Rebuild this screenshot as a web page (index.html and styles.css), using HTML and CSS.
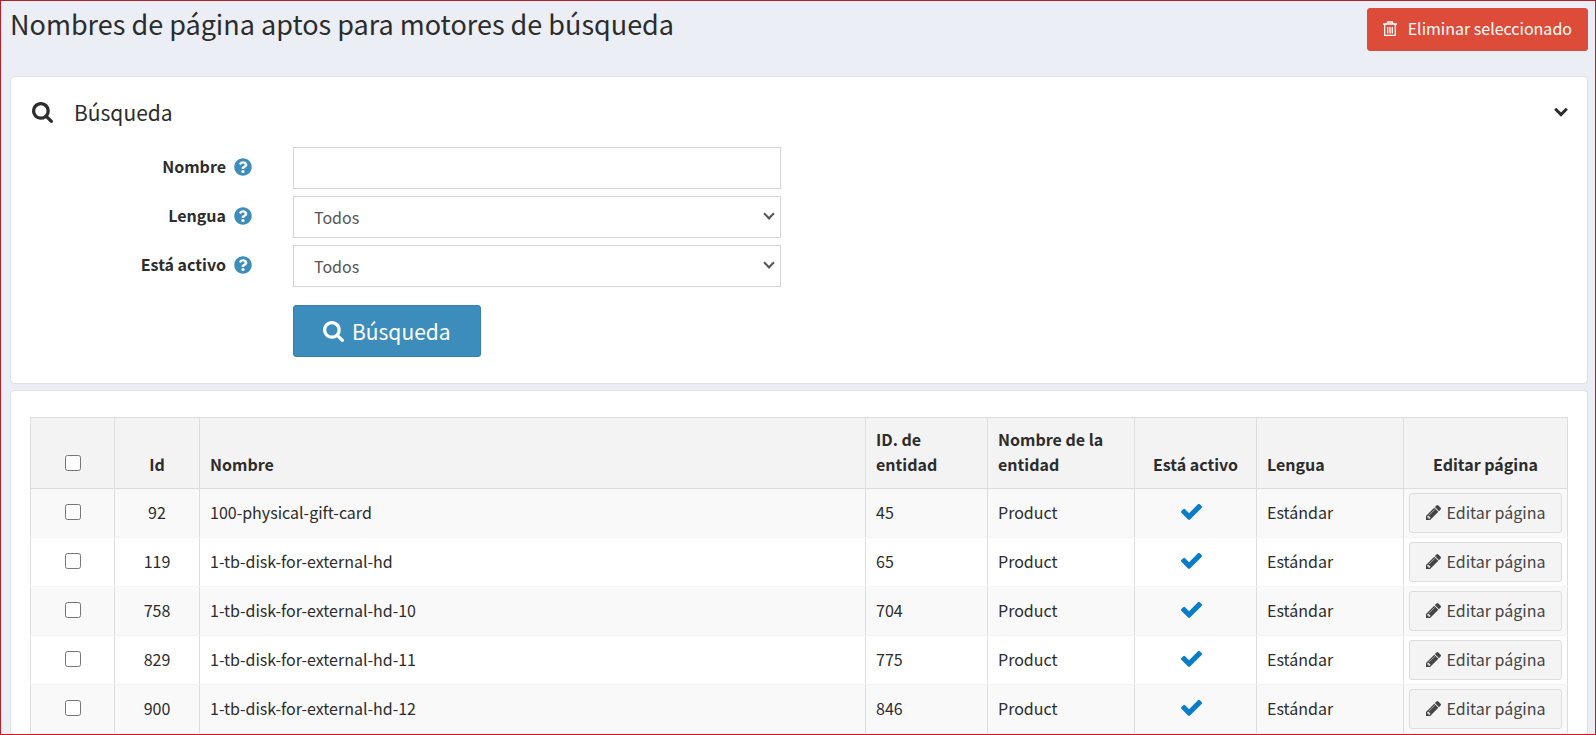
FILE: index.html
```html
<!DOCTYPE html>
<html lang="es">
<head>
<meta charset="utf-8">
<meta name="viewport" content="width=device-width, initial-scale=1">
<title>Nombres de página aptos para motores de búsqueda</title>
<link rel="stylesheet" href="styles.css">
</head>
<body>
<svg class="sprite" aria-hidden="true">
  <symbol id="i-search" viewBox="64 128 1664 1664"><path d="M1216 832q0-185-131.500-316.500t-316.500-131.500-316.500 131.500-131.500 316.500 131.500 316.500 316.500 131.500 316.500-131.500 131.500-316.500zm512 832q0 52-38 90t-90 38q-54 0-90-38l-343-342q-179 124-399 124-143 0-273.500-55.500t-225-150-150-225-55.500-273.500 55.500-273.500 150-225 225-150 273.500-55.500 273.500 55.500 225 150 150 225 55.500 273.500q0 220-124 399l343 343q37 37 37 90z"/></symbol>
  <symbol id="i-help" viewBox="0 0 512 512"><path d="M504 256c0 136.997-111.043 248-248 248S8 392.997 8 256C8 119.083 119.043 8 256 8s248 111.083 248 248zM262.655 90c-54.497 0-89.255 22.957-116.549 63.758-3.536 5.286-2.353 12.415 2.715 16.258l34.699 26.310c5.205 3.947 12.621 3.008 16.665-2.122 17.864-22.658 30.113-35.797 57.303-35.797 20.429 0 45.698 13.148 45.698 32.958 0 14.976-12.363 22.667-32.534 33.976C247.128 238.528 216 254.941 216 296v4c0 6.627 5.373 12 12 12h56c6.627 0 12-5.373 12-12v-1.333c0-28.462 83.186-29.647 83.186-106.667 0-58.002-60.165-102-116.531-102zM256 338c-25.365 0-46 20.635-46 46 0 25.364 20.635 46 46 46s46-20.636 46-46c0-25.365-20.635-46-46-46z"/></symbol>
  <symbol id="i-check" viewBox="121 344 1550 1178"><path d="M1671 566q0 40-28 68l-724 724-136 136q-28 28-68 28t-68-28l-136-136-362-362q-28-28-28-68t28-68l136-136q28-28 68-28t68 28l294 295 656-657q28-28 68-28t68 28l136 136q28 28 28 68z"/></symbol>
  <symbol id="i-pencil" viewBox="128 149 1515 1515"><path d="M491 1536l91-91-235-235-91 91v107h128v128h107zm523-928q0-22-22-22-10 0-17 7l-542 542q-7 7-7 17 0 22 22 22 10 0 17-7l542-542q7-7 7-17zm-54-192l416 416-832 832h-416v-416zm683 96q0 53-37 90l-166 166-416-416 166-165q36-38 90-38 53 0 91 38l235 234q37 39 37 91z"/></symbol>
  <symbol id="i-trash" viewBox="0 0 14 16"><path d="M0 3h14M4.500 3V1h5v2M1.700 3v11.300h10.600V3M4.700 6v6.500M7 6v6.500M9.300 6v6.500" fill="none" stroke="currentColor" stroke-width="1.300"/></symbol>
  <symbol id="i-down" viewBox="0 0 14 10"><path d="M1.200 1.800L7 7.600l5.800-5.800" fill="none" stroke="currentColor" stroke-width="3"/></symbol>
</svg>

<header class="page-header">
  <h1 class="page-title">Nombres de página aptos para motores de búsqueda</h1>
  <button type="button" class="btn btn-danger"><svg class="icon-trash"><use href="#i-trash"/></svg>Eliminar seleccionado</button>
</header>

<main class="content">
  <section class="card search-card">
    <div class="search-head">
      <svg class="icon-search"><use href="#i-search"/></svg>
      <h2 class="search-title">Búsqueda</h2>
      <button type="button" class="toggle" aria-label="Contraer búsqueda"><svg class="icon-down"><use href="#i-down"/></svg></button>
    </div>
    <form class="search-form">
      <div class="field-label"><label for="name">Nombre</label><svg class="icon-help"><use href="#i-help"/></svg></div>
      <input class="control" id="name" type="text">
      <div class="field-label"><label for="language">Lengua</label><svg class="icon-help"><use href="#i-help"/></svg></div>
      <div class="select-wrap"><select class="control" id="language"><option>Todos</option></select></div>
      <div class="field-label"><label for="active">Está activo</label><svg class="icon-help"><use href="#i-help"/></svg></div>
      <div class="select-wrap"><select class="control" id="active"><option>Todos</option></select></div>
      <button type="button" class="btn btn-search"><svg class="icon-search"><use href="#i-search"/></svg>Búsqueda</button>
    </form>
  </section>

  <section class="card table-card">
    <table class="grid">
      <colgroup><col class="c-check"><col class="c-id"><col><col class="c-entity"><col class="c-wide"><col class="c-entity"><col class="c-wide"><col class="c-edit"></colgroup>
      <thead>
        <tr><th class="mid"><input type="checkbox" class="tick" aria-label="Seleccionar todo"></th><th class="mid">Id</th><th>Nombre</th><th>ID. de entidad</th><th>Nombre de la entidad</th><th class="mid">Está activo</th><th>Lengua</th><th class="mid">Editar página</th></tr>
      </thead>
      <tbody>
        <tr><td class="mid"><input type="checkbox" class="tick" aria-label="Seleccionar 92"></td><td class="mid">92</td><td>100-physical-gift-card</td><td>45</td><td>Product</td><td class="state"><svg class="icon-check"><use href="#i-check"/></svg></td><td>Estándar</td><td class="edit"><button type="button" class="btn btn-edit"><svg class="icon-pencil"><use href="#i-pencil"/></svg>Editar página</button></td></tr>
        <tr><td class="mid"><input type="checkbox" class="tick" aria-label="Seleccionar 119"></td><td class="mid">119</td><td>1-tb-disk-for-external-hd</td><td>65</td><td>Product</td><td class="state"><svg class="icon-check"><use href="#i-check"/></svg></td><td>Estándar</td><td class="edit"><button type="button" class="btn btn-edit"><svg class="icon-pencil"><use href="#i-pencil"/></svg>Editar página</button></td></tr>
        <tr><td class="mid"><input type="checkbox" class="tick" aria-label="Seleccionar 758"></td><td class="mid">758</td><td>1-tb-disk-for-external-hd-10</td><td>704</td><td>Product</td><td class="state"><svg class="icon-check"><use href="#i-check"/></svg></td><td>Estándar</td><td class="edit"><button type="button" class="btn btn-edit"><svg class="icon-pencil"><use href="#i-pencil"/></svg>Editar página</button></td></tr>
        <tr><td class="mid"><input type="checkbox" class="tick" aria-label="Seleccionar 829"></td><td class="mid">829</td><td>1-tb-disk-for-external-hd-11</td><td>775</td><td>Product</td><td class="state"><svg class="icon-check"><use href="#i-check"/></svg></td><td>Estándar</td><td class="edit"><button type="button" class="btn btn-edit"><svg class="icon-pencil"><use href="#i-pencil"/></svg>Editar página</button></td></tr>
        <tr><td class="mid"><input type="checkbox" class="tick" aria-label="Seleccionar 900"></td><td class="mid">900</td><td>1-tb-disk-for-external-hd-12</td><td>846</td><td>Product</td><td class="state"><svg class="icon-check"><use href="#i-check"/></svg></td><td>Estándar</td><td class="edit"><button type="button" class="btn btn-edit"><svg class="icon-pencil"><use href="#i-pencil"/></svg>Editar página</button></td></tr>
      </tbody>
    </table>
  </section>
</main>
</body>
</html>
```
FILE: styles.css
```css
* { box-sizing: border-box; }

body {
  margin: 0;
  height: 100vh;
  overflow: hidden;
  display: flex;
  flex-direction: column;
  border: 1px solid #b3212b;
  border-bottom-color: #d9161c;
  background: #ebeef4;
  color: #2c2c2c;
  font-family: "Noto Sans CJK JP", "Noto Sans", sans-serif;
  font-size: 16px;
  line-height: 25px;
}

button, input, select { font: inherit; color: inherit; }
svg { display: block; fill: currentColor; flex: none; }
.sprite { position: absolute; width: 0; height: 0; }

.page-header {
  display: flex;
  justify-content: space-between;
  align-items: flex-start;
  padding: 7px 7px 25px 9px;
}
.page-title { margin: 0; font-size: 27px; font-weight: 400; line-height: 32px; }

.btn {
  display: flex;
  align-items: center;
  justify-content: center;
  border: 1px solid transparent;
  border-radius: 3px;
  white-space: nowrap;
}
.btn-danger { height: 43px; padding: 0 15px 2px; gap: 11px; background: #dd4b39; border-color: #dd4b39; color: #fff; }
.icon-trash { width: 14px; height: 16px; }

.content { flex: 1 0 auto; display: flex; flex-direction: column; gap: 6px; padding: 0 7px 0 9px; }
.card { background: #fff; border: 1px solid #dcdfe3; border-radius: 4px; }
.search-card { padding: 20px 19px 26px; }

.search-head { display: flex; align-items: center; height: 30px; margin-bottom: 20px; padding-left: 2px; }
.icon-search { width: 21px; height: 21px; }
.search-title { flex: 1; margin: 0 0 0 21px; font-size: 21px; font-weight: 400; line-height: 30px; }
.toggle { border: 0; background: none; padding: 0; }
.icon-down { width: 14px; height: 10px; }

.search-form {
  display: grid;
  grid-template-columns: 14.5% 31.7%;
  column-gap: 40px;
  row-gap: 7px;
}
.field-label { display: flex; justify-content: flex-end; align-items: center; gap: 8px; padding: 0 1px 3px 0; font-weight: 700; }
.icon-help { width: 18px; height: 18px; color: #3c8dbc; }
.control {
  width: 100%;
  height: 42px;
  padding: 0 20px;
  border: 1px solid #d2d4d8;
  border-radius: 0;
  background: #fff;
  color: #555;
  outline: 0;
  appearance: none;
}
.select-wrap { position: relative; }
.select-wrap::after {
  content: "";
  position: absolute;
  right: 8px;
  top: 14px;
  width: 6px;
  height: 6px;
  border: solid #555;
  border-width: 0 2px 2px 0;
  transform: rotate(45deg);
  pointer-events: none;
}
.btn-search {
  grid-column: 2;
  justify-self: start;
  height: 52px;
  margin-top: 11px;
  padding: 0 29px;
  gap: 8px;
  background: #3c8dbc;
  border-color: #367fa9;
  color: #fff;
  font-size: 21px;
}

.table-card { flex: 1; padding: 26px 19px 0; }
.grid { width: 100%; table-layout: fixed; border-collapse: collapse; }
.c-check { width: 84px; }
.c-id { width: 85px; }
.c-entity { width: 122px; }
.c-wide { width: 147px; }
.c-edit { width: 164px; }
.grid th, .grid td { border: 1px solid #ddd; text-align: left; }
.grid th { padding: 9px 10px 11px; background: #f3f3f3; font-weight: 700; vertical-align: bottom; }
.grid td { height: 49px; padding: 0 10px 2px; border-top-color: #f4f4f4; border-bottom-color: #f4f4f4; }
.grid thead th { border-bottom-color: #ddd; }
.grid tbody tr:nth-child(odd) { background: #f9f9f9; }
.grid .mid { text-align: center; }
.grid .edit { padding: 4px 5px; }
.grid .state { padding-right: 18px; }
.tick { display: block; width: 16px; height: 16px; margin: 0 auto; }
.grid th .tick { margin-bottom: 6px; }
.icon-check { width: 21px; height: 16px; margin: 0 auto; color: #0a7dc8; }
.btn-edit { width: 100%; height: 40px; padding: 0 0 2px; gap: 6px; background: #f4f4f4; border-color: #ddd; color: #444; }
.icon-pencil { width: 15px; height: 15px; }
```
